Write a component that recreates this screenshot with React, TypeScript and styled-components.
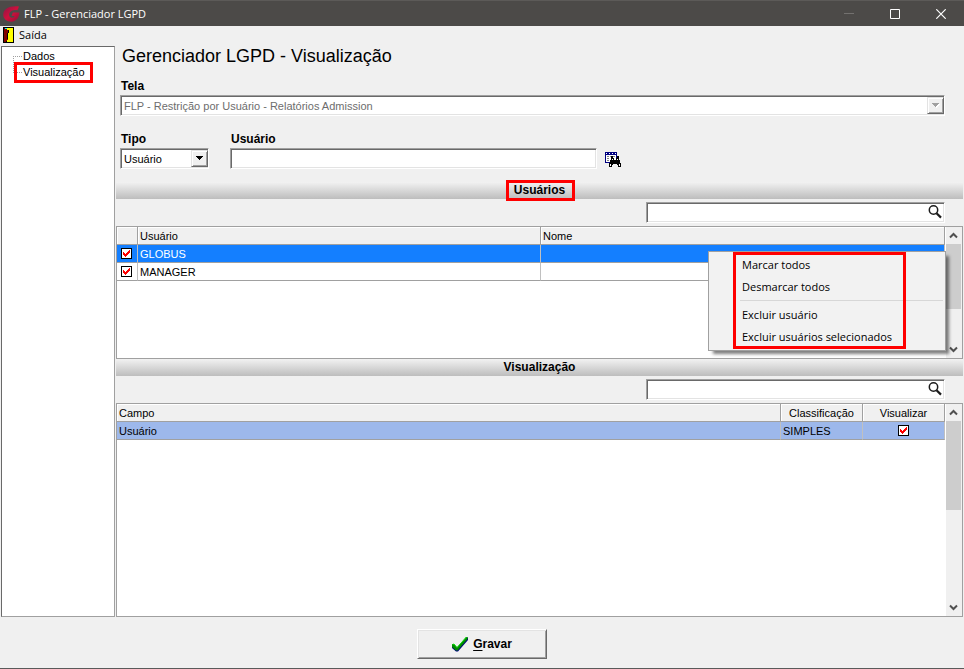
import React from "react";
import styled, { createGlobalStyle, css } from "styled-components";

const classic = '"Liberation Sans", Arial, sans-serif';
const modern = '"Open Sans", "Segoe UI", sans-serif';

const GlobalStyle = createGlobalStyle`
  *, *::before, *::after { box-sizing: border-box; }
  body { margin: 0; background: #f0f0f0; font: 11px/14px ${classic}; color: #000; }
  button, input, select { font: inherit; color: inherit; margin: 0; border-radius: 0; }
`;

const sunken = css`
  border: 1px solid;
  border-color: #a0a0a0 #fff #fff #a0a0a0;
  box-shadow: inset 1px 1px 0 #696969, inset -1px -1px 0 #e3e3e3;
  background: #fff;
`;

const raised = css`
  background: #f0f0f0;
  border: 1px solid;
  border-color: #e3e3e3 #696969 #696969 #e3e3e3;
  box-shadow: inset 1px 1px 0 #fff, inset -1px -1px 0 #a0a0a0;
`;

const Window = styled.div`
  display: flex;
  flex-direction: column;
  min-height: 100vh;
  border-bottom: 1px solid #5a5a5a;
`;

const TitleBar = styled.header`
  display: flex;
  align-items: center;
  height: 26px;
  padding-left: 3px;
  background: #4c4a48;
  border-top: 1px solid #5c5a58;
  color: #fff;
  font: 11px/16px ${modern};
`;

const WindowTitle = styled.span`
  flex: 1;
  padding-left: 4px;
`;

const CaptionButton = styled.button<{ $dim?: boolean }>`
  display: grid;
  place-items: center;
  width: 46px;
  height: 25px;
  padding: 0;
  border: 0;
  background: none;
  color: ${(p) => (p.$dim ? "#73716f" : "#fff")};
`;

const MenuBar = styled.nav`
  display: flex;
  height: 20px;
  padding-left: 3px;
`;

const MenuEntry = styled.button`
  display: flex;
  align-items: center;
  gap: 5px;
  padding: 0 0 2px;
  border: 0;
  background: none;
  font: 11px/16px ${modern};
`;

const Body = styled.div`
  display: flex;
  flex: 1;
  gap: 1px;
  padding-left: 1px;
`;

const Sidebar = styled.aside`
  width: 114px;
  padding: 1px 0 0 11px;
  background: #fff;
  border: 1px solid;
  border-color: #696969 #a0a0a0 #a0a0a0 #696969;
`;

const Tree = styled.ul`
  margin: 0;
  padding: 0;
  list-style: none;
  line-height: 16px;
`;

const TreeItem = styled.li`
  position: relative;
  display: flex;
  align-items: center;
  height: 16px;
`;

const TreeLink = styled.a`
  color: #000;
  text-decoration: none;
  padding-left: 1px;
`;

const RedFrame = styled.span<{ $inset: string }>`
  position: absolute;
  inset: ${(p) => p.$inset};
  border: 3px solid #f00;
  pointer-events: none;
`;

const Main = styled.main`
  flex: 1;
  min-width: 0;
  display: flex;
  flex-direction: column;
  padding-right: 1px;
`;

const Form = styled.form`
  display: flex;
  flex-direction: column;
  gap: 16px;
  padding: 0 18px 13px 4px;
`;

const Heading = styled.h1`
  margin: 0 0 -3px;
  padding-left: 2px;
  font: 18px/20px ${classic};
`;

const FieldRow = styled.div`
  display: flex;
  align-items: flex-end;
  gap: 21px;
`;

const Field = styled.div<{ $width?: string }>`
  display: flex;
  flex-direction: column;
  gap: 2px;
  width: ${(p) => p.$width ?? "auto"};
`;

const Label = styled.label`
  padding-left: 1px;
  font-weight: bold;
  font-size: 12px;
`;

const Stack = styled.span`
  display: grid;
  align-items: center;
  height: 21px;
  & > * { grid-area: 1 / 1; }
`;

const Select = styled.select`
  ${sunken}
  appearance: none;
  width: 100%;
  height: 21px;
  padding: 0 20px 0 3px;
  opacity: 1;
  outline: none;
  &:disabled { color: #6d6d6d; }
`;

const DropMark = styled.span`
  ${raised}
  display: grid;
  place-items: center;
  justify-self: end;
  width: 17px;
  height: 17px;
  margin-right: 1px;
  pointer-events: none;
`;

const TextInput = styled.input`
  ${sunken}
  width: 100%;
  height: 21px;
  padding: 0 20px 0 4px;
  outline: none;
`;

const UserLookup = styled.div`
  display: flex;
  align-items: flex-end;
  gap: 8px;
`;

const IconButton = styled.button`
  display: grid;
  place-items: center;
  padding: 0;
  border: 0;
  background: none;
`;

const LookupButton = styled(IconButton)`
  width: 16px;
  height: 18px;
`;

const MagnifierButton = styled(IconButton)`
  justify-self: end;
  width: 16px;
  height: 16px;
  margin: 0 2px 2px 0;
`;

const SectionBar = styled.h2`
  display: flex;
  justify-content: center;
  margin: 0;
  background: linear-gradient(#f2f2f2, #bdbdbd);
  font: bold 12px/17px ${classic};
`;

const SectionTitle = styled.span`
  position: relative;
`;

const SearchRow = styled.div`
  display: flex;
  justify-content: flex-end;
  padding: 3px 18px 3px 0;
`;

const SearchBox = styled(Stack)`
  width: 299px;
`;

const GridPanel = styled.section<{ $grow?: boolean }>`
  position: relative;
  display: flex;
  flex: ${(p) => (p.$grow ? "1" : "0 0 133px")};
  align-items: stretch;
  background: #fff;
  border: 1px solid #a0a0a0;
`;

const GridArea = styled.div`
  flex: 1;
  min-width: 0;
`;

const Table = styled.table`
  width: 100%;
  table-layout: fixed;
  border-collapse: separate;
  border-spacing: 0;
`;

const Col = styled.col<{ $width?: number }>`
  width: ${(p) => (p.$width ? `${p.$width}px` : "auto")};
`;

const HeadCell = styled.th<{ $center?: boolean }>`
  height: 18px;
  padding: 0 2px;
  background: #f0f0f0;
  border: solid #a0a0a0;
  border-width: 0 1px 1px 0;
  box-shadow: inset 1px 1px 0 #fff;
  font-weight: normal;
  text-align: ${(p) => (p.$center ? "center" : "left")};
`;

const rowTones = {
  plain: css`background: #fff;`,
  active: css`background: #147fff; color: #fff;`,
  soft: css`background: #9db8eb;`,
};

const Row = styled.tr<{ $tone: keyof typeof rowTones }>`
  ${(p) => rowTones[p.$tone]}
`;

const Cell = styled.td<{ $center?: boolean }>`
  height: 18px;
  padding: 0 2px;
  border: solid;
  border-width: 0 1px 1px 0;
  border-color: #a0a0a0 #c0c0c0;
  text-align: ${(p) => (p.$center ? "center" : "left")};
`;

const TickCell = styled(Cell)`
  padding: 0 2px 1px 1px;
  line-height: 11px;
`;

const Tick = styled.span`
  display: inline-grid;
  vertical-align: middle;
  & > * { grid-area: 1 / 1; }
  & > svg { pointer-events: none; display: none; }
  & > input:checked + svg { display: block; }
`;

const TickInput = styled.input`
  appearance: none;
  width: 11px;
  height: 11px;
  background: #fff;
  border: 1px solid #000;
`;

const Scrollbar = styled.div`
  display: flex;
  flex-direction: column;
  width: 16px;
  margin-left: 1px;
  padding-right: 1px;
  background: #f0f0f0;
`;

const ScrollButton = styled(IconButton)`
  height: 17px;
`;

const Track = styled.div`
  flex: 1;
`;

const Thumb = styled.div<{ $size: number }>`
  height: ${(p) => p.$size}%;
  background: #cdcdcd;
`;

const ContextMenu = styled.div`
  position: absolute;
  top: 24px;
  right: 16px;
  width: 238px;
  padding: 2px;
  background: #f2f2f2;
  border: 1px solid #a0a0a0;
  box-shadow: 4px 4px 3px -1px rgba(0, 0, 0, 0.5);
  font: 11px/22px ${modern};
`;

const MenuItem = styled.button`
  display: block;
  width: 100%;
  padding: 0 0 0 31px;
  border: 0;
  background: none;
  text-align: left;
`;

const MenuRule = styled.hr`
  margin: 2px 0 3px 29px;
  border: 0;
  border-top: 1px solid #d7d7d7;
`;

const Footer = styled.footer`
  display: flex;
  justify-content: center;
  padding: 12px 0 9px;
`;

const SaveButton = styled.button`
  display: flex;
  align-items: center;
  justify-content: center;
  gap: 5px;
  width: 130px;
  height: 30px;
  border: 1px solid;
  border-color: #fff #696969 #696969 #fff;
  box-shadow: inset 1px 1px 0 #e3e3e3, inset -1px -1px 0 #a0a0a0;
  background: #f0f0f0;
  font-weight: bold;
  font-size: 12px;
`;

const Accel = styled.u`
  text-underline-offset: 2px;
`;

const Logo = () => (
  <svg width="17" height="16" viewBox="0 0 17 16" aria-hidden="true">
    <defs>
      <linearGradient id="brand" x1="0" y1="0" x2="1" y2="1">
        <stop offset="0" stopColor="#8c1646" />
        <stop offset="0.5" stopColor="#d0103c" />
        <stop offset="1" stopColor="#8f1238" />
      </linearGradient>
    </defs>
    <path
      fill="url(#brand)"
      d="M16 0.5 L14.5 4.2 C10 3.6 6.6 5.2 6.2 8.2 C6 10.8 7.6 12 9.6 11.6 C10.8 11.3 11.4 10.7 11.6 9.9 L8.6 9.9 L9.8 6.6 L16.4 6.6 C16.2 11 14 15.6 8.4 15.8 C3.6 15.8 0.2 12.8 0.2 8.6 C0.4 3 6 -0.4 16 0.5 Z"
    />
  </svg>
);

const DoorIcon = () => (
  <svg width="11" height="16" viewBox="0 0 11 16" shapeRendering="crispEdges" aria-hidden="true">
    <path fill="#000" d="M0 0h11v16H0z" />
    <path fill="#ff0" d="M4 1h6v14H4z" />
    <path fill="#800000" d="M1 1h2v1h1v1h1v10H4v1H3v1H1z" />
    <path fill="#0ff" d="M2 1h2v1H2z" />
    <path fill="#000" d="M5 3h1v3H5zM4 6h1v6H4z" />
  </svg>
);

const TreeLines = ({ last }: { last?: boolean }) => (
  <svg width="9" height="16" viewBox="0 0 9 16" shapeRendering="crispEdges" aria-hidden="true">
    <path
      d={last ? "M0.5 0V9M0 8.5H9" : "M0.5 8V16M0 8.5H9"}
      stroke="#a0a0a0"
      strokeDasharray="1 1"
      fill="none"
    />
  </svg>
);

const DownTriangle = ({ muted }: { muted?: boolean }) => (
  <svg width="8" height="5" viewBox="0 0 8 5" shapeRendering="crispEdges" aria-hidden="true">
    {muted && <path fill="#fff" d="M1 1h7v1H7v1H6v1H5v1H4V4H3V3H2V2H1z" />}
    <path fill={muted ? "#a0a0a0" : "#000"} d="M0 0h7v1H6v1H5v1H4v1H3V3H2V2H1V1H0z" />
  </svg>
);

const LookupIcon = () => (
  <svg width="16" height="16" viewBox="0 0 16 16" shapeRendering="crispEdges" aria-hidden="true">
    <path fill="#000080" d="M0 0h12v11H0z" />
    <path fill="#fff" d="M1 3h10v7H1zM1 1h1v1H1zM4 1h1v1H4zM7 1h1v1H7zM10 1h1v1h-1z" />
    <path fill="#808080" d="M2 4h2v1H2zM5 4h1v1H5zM8 4h2v1H8zM2 6h2v1H2zM2 8h2v1H2z" />
    <path
      fill="#000"
      d="M6 4h2v2H6zM12 4h2v2h-2zM6 6h3v2H6zM11 6h3v2h-3zM5 8h10v3H5zM4 11h12v1H4zM4 12h4v1H4zM12 12h4v1h-4zM4 13h3v2H4zM13 13h3v2h-3z"
    />
    <path fill="#fff" d="M5 12h1v2H5zM14 12h1v2h-1zM7 7h1v1H7zM12 7h1v1h-1z" />
  </svg>
);

const Magnifier = () => (
  <svg width="16" height="16" viewBox="0 0 16 16" aria-hidden="true">
    <circle cx="6.5" cy="6" r="4.2" fill="none" stroke="#1c1c1c" strokeWidth="1.5" />
    <path d="M9.5 9.2L14 13.6" stroke="#1c1c1c" strokeWidth="2.2" />
  </svg>
);

const Chevron = ({ down }: { down?: boolean }) => (
  <svg width="9" height="7" viewBox="0 0 9 7" aria-hidden="true">
    <path d={down ? "M1 1.5L4.5 5L8 1.5" : "M1 5.5L4.5 2L8 5.5"} stroke="#505050" strokeWidth="2" fill="none" />
  </svg>
);

const SaveCheck = () => (
  <svg width="16" height="16" viewBox="0 0 16 16" aria-hidden="true">
    <path fill="#000080" d="M0 9l1-1 4 4L14.5 1.5H16V4L6 15.5H4L0 12z" />
    <path fill="#008a00" d="M0 8h2l3 3.4L14 1h1.6v2L5.6 14.4H4L0 11z" />
    <path stroke="#12e012" strokeWidth="1" fill="none" d="M0.5 8.5L2 8l3 3.5L14.5 1" />
  </svg>
);

const CheckBox = ({ label }: { label: string }) => (
  <Tick>
    <TickInput type="checkbox" defaultChecked aria-label={label} />
    <svg width="11" height="11" viewBox="0 0 11 11" shapeRendering="crispEdges" aria-hidden="true">
      <path
        fill="#f00"
        d="M2 4h1v1h1v1h1V5h1V4h1V3h1V2h1v3H8v1H7v1H6v1H5v1H4V8H3V7H2z"
      />
    </svg>
  </Tick>
);

const Search = ({ label }: { label: string }) => (
  <SearchRow>
    <SearchBox>
      <TextInput type="text" aria-label={label} />
      <MagnifierButton type="button" aria-label={`Buscar: ${label}`}>
        <Magnifier />
      </MagnifierButton>
    </SearchBox>
  </SearchRow>
);

const VerticalScroll = ({ size }: { size: number }) => (
  <Scrollbar>
    <ScrollButton type="button" aria-label="Rolar para cima">
      <Chevron />
    </ScrollButton>
    <Track>
      <Thumb $size={size} />
    </Track>
    <ScrollButton type="button" aria-label="Rolar para baixo">
      <Chevron down />
    </ScrollButton>
  </Scrollbar>
);

const users = [
  { name: "GLOBUS", tone: "active" as const },
  { name: "MANAGER", tone: "plain" as const },
];

const fields = [{ name: "Usuário", kind: "SIMPLES" }];

export default function App() {
  return (
    <>
      <GlobalStyle />
      <Window>
        <TitleBar>
          <Logo />
          <WindowTitle>FLP - Gerenciador LGPD</WindowTitle>
          <CaptionButton type="button" $dim aria-label="Minimizar">
            <svg width="10" height="11" viewBox="0 0 10 11" aria-hidden="true">
              <path d="M0 5.5H10" stroke="currentColor" />
            </svg>
          </CaptionButton>
          <CaptionButton type="button" aria-label="Maximizar">
            <svg width="10" height="10" viewBox="0 0 10 10" aria-hidden="true">
              <path d="M0.5 0.5H9.5V9.5H0.5Z" stroke="currentColor" fill="none" />
            </svg>
          </CaptionButton>
          <CaptionButton type="button" aria-label="Fechar">
            <svg width="10" height="10" viewBox="0 0 10 10" aria-hidden="true">
              <path d="M0.3 0.3L9.7 9.7M9.7 0.3L0.3 9.7" stroke="currentColor" strokeWidth="1.2" />
            </svg>
          </CaptionButton>
        </TitleBar>
        <MenuBar>
          <MenuEntry type="button">
            <DoorIcon />
            Saída
          </MenuEntry>
        </MenuBar>
        <Body>
          <Sidebar>
            <Tree>
              <TreeItem>
                <TreeLines />
                <TreeLink href="#dados">Dados</TreeLink>
              </TreeItem>
              <TreeItem>
                <TreeLines last />
                <TreeLink href="#visualizacao">Visualização</TreeLink>
                <RedFrame $inset="-2px 21px -3px 1px" />
              </TreeItem>
            </Tree>
          </Sidebar>
          <Main>
            <Form>
              <Heading>Gerenciador LGPD - Visualização</Heading>
              <Field>
                <Label htmlFor="tela">Tela</Label>
                <Stack>
                  <Select id="tela" disabled>
                    <option>FLP - Restrição por Usuário - Relatórios Admission</option>
                  </Select>
                  <DropMark>
                    <DownTriangle muted />
                  </DropMark>
                </Stack>
              </Field>
              <FieldRow>
                <Field $width="89px">
                  <Label htmlFor="tipo">Tipo</Label>
                  <Stack>
                    <Select id="tipo">
                      <option>Usuário</option>
                    </Select>
                    <DropMark>
                      <DownTriangle />
                    </DropMark>
                  </Stack>
                </Field>
                <UserLookup>
                  <Field $width="367px">
                    <Label htmlFor="usuario">Usuário</Label>
                    <TextInput id="usuario" type="text" />
                  </Field>
                  <LookupButton type="button" aria-label="Pesquisar usuário">
                    <LookupIcon />
                  </LookupButton>
                </UserLookup>
              </FieldRow>
            </Form>

            <SectionBar>
              <SectionTitle>
                Usuários
                <RedFrame $inset="-2px -10px -2px -8px" />
              </SectionTitle>
            </SectionBar>
            <Search label="Usuários" />
            <GridPanel>
              <GridArea>
                <Table>
                  <colgroup>
                    <Col $width={21} />
                    <Col $width={403} />
                    <Col />
                  </colgroup>
                  <thead>
                    <tr>
                      <HeadCell aria-label="Seleção" />
                      <HeadCell>Usuário</HeadCell>
                      <HeadCell>Nome</HeadCell>
                    </tr>
                  </thead>
                  <tbody>
                    {users.map((u) => (
                      <Row key={u.name} $tone={u.tone}>
                        <TickCell $center>
                          <CheckBox label={u.name} />
                        </TickCell>
                        <Cell>{u.name}</Cell>
                        <Cell />
                      </Row>
                    ))}
                  </tbody>
                </Table>
              </GridArea>
              <VerticalScroll size={67} />
              <ContextMenu>
                <MenuItem type="button">Marcar todos</MenuItem>
                <MenuItem type="button">Desmarcar todos</MenuItem>
                <MenuRule />
                <MenuItem type="button">Excluir usuário</MenuItem>
                <MenuItem type="button">Excluir usuários selecionados</MenuItem>
                <RedFrame $inset="0 39px 1px 24px" />
              </ContextMenu>
            </GridPanel>

            <SectionBar>
              <SectionTitle>Visualização</SectionTitle>
            </SectionBar>
            <Search label="Visualização" />
            <GridPanel $grow>
              <GridArea>
                <Table>
                  <colgroup>
                    <Col />
                    <Col $width={82} />
                    <Col $width={82} />
                  </colgroup>
                  <thead>
                    <tr>
                      <HeadCell>Campo</HeadCell>
                      <HeadCell $center>Classificação</HeadCell>
                      <HeadCell $center>Visualizar</HeadCell>
                    </tr>
                  </thead>
                  <tbody>
                    {fields.map((f) => (
                      <Row key={f.name} $tone="soft">
                        <Cell>{f.name}</Cell>
                        <Cell>{f.kind}</Cell>
                        <TickCell $center>
                          <CheckBox label={`Visualizar ${f.name}`} />
                        </TickCell>
                      </Row>
                    ))}
                  </tbody>
                </Table>
              </GridArea>
              <VerticalScroll size={50} />
            </GridPanel>
          </Main>
        </Body>
        <Footer>
          <SaveButton type="button">
            <SaveCheck />
            <span>
              <Accel>G</Accel>ravar
            </span>
          </SaveButton>
        </Footer>
      </Window>
    </>
  );
}
